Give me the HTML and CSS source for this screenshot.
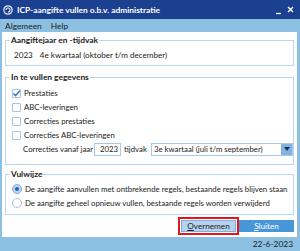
FILE: index.html
```html
<!DOCTYPE html>
<html lang="nl">
<head>
    <meta charset="UTF-8">
    <meta name="viewport" content="width=device-width, initial-scale=1.0">
    <title>ICP-aangifte vullen o.b.v. administratie</title>
    <link rel="stylesheet" href="styles.css">
</head>
<body>
    <div class="window">
        <div class="titlebar">
            <svg class="app-icon" width="10" height="10" viewBox="0 0 10 10">
                <circle cx="5" cy="5" r="4.2" fill="none" stroke="#dfe8f5" stroke-width="1.2"/>
                <path d="M3 5a2 2 0 1 1 2 2" fill="none" stroke="#dfe8f5" stroke-width="1.1"/>
            </svg>
            <span class="title">ICP-aangifte vullen o.b.v. administratie</span>
            <svg class="controls" width="24" height="10" viewBox="0 0 24 10">
                <path d="M3 8.5h5" stroke="#fff" stroke-width="1.3"/>
                <path d="M15 2l5 5M20 2l-5 5" stroke="#fff" stroke-width="1.4"/>
            </svg>
        </div>
        <div class="menubar">
            <span>Algemeen</span>
            <span>Help</span>
        </div>
        <div class="panel">
            <fieldset class="group first">
                <legend>Aangiftejaar en -tijdvak</legend>
                <div class="row period">
                    <span>2023</span>
                    <span>4e kwartaal (oktober t/m december)</span>
                </div>
            </fieldset>

            <fieldset class="group second">
                <legend>In te vullen gegevens</legend>
                <div class="row check">
                    <span class="box checked">
                        <svg width="9" height="9" viewBox="0 0 9 9"><path d="M1.5 4.5l2 2.2L7.8 1.8" fill="none" stroke="#2b6cc4" stroke-width="1.3"/></svg>
                    </span>
                    Prestaties
                </div>
                <div class="row check"><span class="box"></span>ABC-leveringen</div>
                <div class="row check"><span class="box"></span>Correcties prestaties</div>
                <div class="row check"><span class="box"></span>Correcties ABC-leveringen</div>
                <div class="row corr">
                    <span class="corr-label">Correcties vanaf jaar</span>
                    <span class="year">2023</span>
                    <span class="corr-label">tijdvak</span>
                    <span class="select">
                        <span class="select-text">3e kwartaal (juli t/m september)</span>
                        <span class="select-btn">
                            <svg width="6" height="4" viewBox="0 0 6 4"><path d="M0 0h6L3 4z" fill="#1d2c44"/></svg>
                        </span>
                    </span>
                </div>
            </fieldset>

            <fieldset class="group third">
                <legend>Vulwijze</legend>
                <div class="row radio"><span class="dot on"></span>De aangifte aanvullen met ontbrekende regels, bestaande regels blijven staan</div>
                <div class="row radio"><span class="dot"></span>De aangifte geheel opnieuw vullen, bestaande regels worden verwijderd</div>
            </fieldset>

            <div class="buttons">
                <span class="highlight">
                    <button class="btn primary"><u>O</u>vernemen</button>
                </span>
                <button class="btn"><u>S</u>luiten</button>
            </div>
        </div>
        <div class="statusbar">22-6-2023</div>
    </div>
</body>
</html>
```

FILE: styles.css
```css
body {
    margin: 0;
    font-family: Lato, "Open Sans", sans-serif;
    font-size: 7.8px;
    color: #1b1b1b;
}
.window {
    width: 300px;
    height: 251px;
    display: flex;
    flex-direction: column;
    background-color: #8cc0e3;
    overflow: hidden;
}
.titlebar {
    height: 19px;
    background-color: #1b408f;
    display: flex;
    align-items: center;
    padding-left: 3px;
}
.app-icon {
    margin-right: 4px;
}
.title {
    color: #fff;
    font-weight: bold;
    font-size: 8.4px;
    flex: 1;
}
.controls {
    margin-right: 3px;
}
.menubar {
    height: 13px;
    display: flex;
    align-items: center;
    gap: 9px;
    padding-left: 5px;
    font-size: 8.4px;
}
.panel {
    margin: 0 3px 0 2px;
    height: 205px;
    background: #fff;
    padding: 2px 0 0 0;
    box-sizing: border-box;
    display: flex;
    flex-direction: column;
}
.group {
    border: 1px solid #b9d7ee;
    margin: 0 3px;
    padding: 0 0 0 4px;
    min-width: 0;
}
.group legend {
    font-weight: bold;
    font-size: 8.4px;
    line-height: 13px;
    padding: 0 1px;
}
.first {
    padding-top: 1px;
    padding-bottom: 3px;
}
.second {
    margin-top: 5px;
    padding-top: 2px;
    padding-bottom: 8px;
}
.third {
    margin-top: 3px;
    padding-top: 1px;
    padding-bottom: 4px;
}
.row {
    height: 14px;
    display: flex;
    align-items: center;
    white-space: nowrap;
}
.period {
    padding-left: 4px;
    gap: 7px;
    font-size: 8.1px;
}
.check, .radio {
    padding-left: 2px;
}
.box {
    flex: none;
    width: 9px;
    height: 9px;
    border: 1px solid #a9c4de;
    border-radius: 1px;
    box-sizing: border-box;
    margin-right: 3px;
    display: flex;
    align-items: center;
    justify-content: center;
}
.box svg {
    flex: none;
}
.dot {
    flex: none;
    width: 10px;
    height: 10px;
    border: 1px solid #a9c4de;
    border-radius: 50%;
    box-sizing: border-box;
    margin-right: 3px;
    position: relative;
}
.dot.on {
    background: #b7d5f0;
    border-color: #7fb0df;
}
.dot.on::after {
    content: "";
    position: absolute;
    left: 2px;
    top: 2px;
    width: 4px;
    height: 4px;
    border-radius: 50%;
    background: #2566bd;
}
.corr {
    padding-left: 13px;
}
.year {
    flex: none;
    width: 27px;
    height: 13px;
    border: 1px solid #a9c8e3;
    box-sizing: border-box;
    text-align: right;
    padding-right: 2px;
    line-height: 11px;
    margin: 0 3px 0 1px;
}
.select {
    flex: 1;
    height: 13px;
    border: 1px solid #a9c8e3;
    box-sizing: border-box;
    margin-left: 4px;
    display: flex;
    align-items: center;
}
.select-text {
    flex: 1;
    padding-left: 2px;
}
.select-btn {
    width: 11px;
    height: 11px;
    background: #7fb4e2;
    display: flex;
    align-items: center;
    justify-content: center;
}
.buttons {
    margin-top: 2px;
    padding-right: 3px;
    display: flex;
    justify-content: flex-end;
    align-items: center;
    gap: 0;
}
.highlight {
    border: 2px solid #e3151f;
    padding: 1px;
    display: flex;
}
.btn {
    width: 55px;
    height: 12px;
    border: 1px solid #4a95d6;
    background: #4796d8;
    color: #fff;
    font-family: inherit;
    font-size: 8.2px;
    padding: 0;
    line-height: 10px;
}
.btn.primary {
    background: #b5d3ef;
    border-color: #7eb0de;
    color: #1b1b1b;
}
.statusbar {
    flex: 1;
    display: flex;
    align-items: center;
    justify-content: flex-end;
    padding-right: 7px;
    font-size: 8.4px;
}
```
